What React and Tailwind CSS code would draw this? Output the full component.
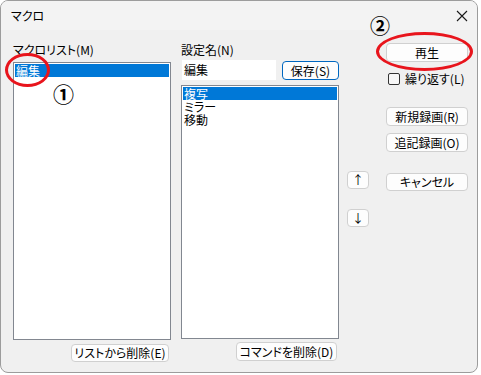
import React, { useState } from 'react';

const font = { fontFamily: '"Noto Sans CJK JP", "Noto Sans", sans-serif' };

function Btn({ children, className = '', primary = false }) {
    return (
        <button
            className={`flex items-center justify-center rounded-[4px] border bg-[#fdfdfd] text-[12px] leading-none text-black ${primary ? 'border-[#0067c0]' : 'border-[#d0d0d0]'} ${className}`}
        >
            {children}
        </button>
    );
}

function ListBox({ items, selected, className = '' }) {
    return (
        <div className={`border border-[#828790] bg-white pt-[1px] ${className}`}>
            {items.map((item, i) => (
                <div
                    key={item}
                    className={`mx-[1px] h-[13px] pl-[1px] text-[12px] leading-[13px] ${i === selected ? 'bg-[#0078d7] text-white' : 'text-black'}`}
                >
                    {item}
                </div>
            ))}
        </div>
    );
}

export default function App() {
    const [repeat, setRepeat] = useState(false);

    return (
        <div style={font} className="relative h-[375px] w-[481px] bg-white [font-feature-settings:'palt']">
            <div className="flex h-[373px] w-[478px] flex-col overflow-hidden rounded-[8px] border border-[#9c9c9c] bg-[#f0f0f0]">
                {/* title bar */}
                <div className="flex h-[29px] shrink-0 items-center justify-between bg-[#f3f3f3] pl-[10px] pr-[6px]">
                    <span className="text-[12px] text-black">マクロ</span>
                    <svg width="12" height="12" viewBox="0 0 12 12" className="mr-[3px]">
                        <path d="M1 1 L11 11 M11 1 L1 11" stroke="#1a1a1a" strokeWidth="1.1" />
                    </svg>
                </div>

                {/* body */}
                <div className="flex flex-1 pl-[12px]">
                    {/* macro list */}
                    <div className="flex w-[158px] flex-col pt-[12px]">
                        <div className="h-[16px] text-[12px] leading-[16px] text-black">マクロリスト(M)</div>
                        <ListBox items={['編集']} selected={0} className="mt-[4px] h-[278px]" />
                        <Btn className="mr-[2px] mt-[4px] h-[18px] w-[98px] self-end">リストから削除(E)</Btn>
                    </div>

                    {/* settings */}
                    <div className="ml-[10px] flex w-[158px] flex-col pt-[12px]">
                        <div className="h-[16px] text-[12px] leading-[16px] text-black">設定名(N)</div>
                        <div className="mt-[2px] flex h-[20px] items-start">
                            <div className="ml-[1px] flex h-[20px] w-[94px] items-center bg-white pl-[2px] text-[12px] text-black">編集</div>
                            <Btn primary className="ml-[6px] mt-[1px] h-[19px] w-[57px]">保存(S)</Btn>
                        </div>
                        <ListBox items={['複写', 'ミラー', '移動']} selected={0} className="mt-[5px] h-[254px]" />
                        <Btn className="mr-[2px] mt-[3px] h-[19px] w-[101px] self-end">コマンドを削除(D)</Btn>
                    </div>

                    {/* up / down */}
                    <div className="ml-[8px] flex w-[22px] flex-col pt-[141px]">
                        <Btn className="h-[18px] w-[22px] text-[11px]">↑</Btn>
                        <Btn className="mt-[20px] h-[18px] w-[22px] text-[11px]">↓</Btn>
                    </div>

                    {/* actions */}
                    <div className="ml-[17px] flex w-[82px] flex-col pt-[13px]">
                        <Btn className="h-[19px] w-[82px]">再生</Btn>
                        <label className="mt-[11px] flex h-[12px] items-center pl-[2px]">
                            <span
                                onClick={() => setRepeat(!repeat)}
                                className="h-[12px] w-[12px] rounded-[2px] border border-[#333] bg-[#f7f7f7]"
                            />
                            <span className="ml-[5px] text-[12px] leading-[12px] text-black">繰り返す(L)</span>
                        </label>
                        <Btn className="mt-[22px] h-[19px] w-[82px]">新規録画(R)</Btn>
                        <Btn className="mt-[7px] h-[19px] w-[82px]">追記録画(O)</Btn>
                        <Btn className="mt-[21px] h-[18px] w-[82px]">キャンセル</Btn>
                    </div>
                </div>
            </div>

            {/* annotations */}
            <div className="absolute left-[5px] top-[53px] h-[34px] w-[45px] rounded-[50%] border-[3px] border-[#e8141c]" />
            <div className="absolute left-[53px] top-[80px] text-[21px] font-bold leading-[26px] text-black">①</div>
            <div className="absolute left-[376px] top-[32px] h-[39px] w-[97px] rounded-[50%] border-[3px] border-[#e8141c]" />
            <div className="absolute left-[370px] top-[13px] text-[20px] font-bold leading-[26px] text-black">②</div>
        </div>
    );
}
